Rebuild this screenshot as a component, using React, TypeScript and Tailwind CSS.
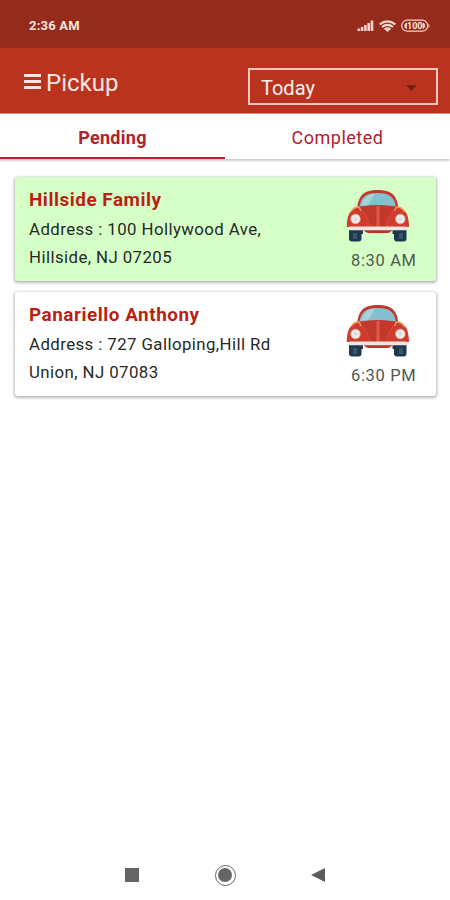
type Pickup = { name: string; address: string; city: string; time: string; active: boolean };

const PICKUPS: Pickup[] = [
  { name: "Hillside Family", address: "100 Hollywood Ave,", city: "Hillside, NJ 07205", time: "8:30 AM", active: true },
  { name: "Panariello Anthony", address: "727 Galloping,Hill Rd", city: "Union, NJ 07083", time: "6:30 PM", active: false },
];

function StatusIcons() {
  return (
    <svg width="74" height="16" viewBox="0 0 74 16" fill="#f3d3cc">
      <rect x="0.5" y="10.5" width="2.6" height="2.5" />
      <rect x="3.8" y="9" width="2.6" height="4" />
      <rect x="7.1" y="7" width="2.6" height="6" />
      <rect x="10.4" y="5" width="2.6" height="8" />
      <rect x="13.7" y="2.5" width="2.6" height="10.5" />
      <path d="M22 5.6 Q30.5 -1 39 5.6 L37.6 7.2 Q30.5 1.8 23.4 7.2 Z" />
      <path d="M24.3 8.2 Q30.5 3.3 36.7 8.2 L35.2 9.8 Q30.5 6.2 25.8 9.8 Z" />
      <path d="M26.8 10.7 Q30.5 7.8 34.2 10.7 L30.5 14 Z" />
      <rect x="44.7" y="2.2" width="26" height="11" rx="5.5" fill="none" stroke="#f3d3cc" strokeWidth="1.2" />
      <path d="M50 4.5 C46.5 5 46.5 10.5 50 11 Z M65.5 4.5 C69 5 69 10.5 65.5 11 Z" />
      <path d="M71.5 5.5 Q73.5 7.7 71.5 10 Z" />
      <text x="57.8" y="11" textAnchor="middle" fontSize="9" fontWeight="700" fill="#fbe3dd">100</text>
    </svg>
  );
}

function Car() {
  return (
    <svg className="shrink-0" width="64" height="54" viewBox="0 0 64 54">
      <rect x="3" y="36" width="12.5" height="16.5" rx="3" fill="#20384e" />
      <rect x="48" y="36" width="12.5" height="16.5" rx="3" fill="#20384e" />
      <path d="M14 41 H17 V45 H14 Z M46.5 41 H49 V45 H46.5 Z" fill="#20384e" />
      <rect x="7" y="44" width="4" height="6" fill="#35566f" />
      <rect x="53" y="44" width="4" height="6" fill="#35566f" />
      <path d="M11 21 C12 7 17 1 31.7 1 C46.5 1 51.5 7 52.5 21 Z" fill="#c0392b" />
      <path d="M13.5 18 C15 8 20 4 31.7 4 C43.5 4 48.5 8 50 18 Q32 15.5 13.5 18 Z" fill="#85bfd0" />
      <path d="M16.5 13 C19 7.5 23 5 29 4.5 L22 16.5 H15 Z" fill="#a5d3da" />
      <path d="M0.8 38 C0.8 27 4 19 13 18 Q32 15 51 18 C60 19 63 27 63 38 Z" fill="#cf3b2c" />
      <path d="M12 18 Q32 14 52 18 Q42 24 40 38 H24 Q22 24 12 18 Z" fill="#c4382b" />
      <path d="M30.4 17 H33.6 V38 H30.4 Z" fill="#dc5848" />
      <path d="M13 19 Q21 25 24 37 M51 19 Q43 25 40 37" fill="none" stroke="#d75a42" strokeWidth="0.7" />
      <path d="M5 23 C7 19 9 18 13 18 L15 22 M58.5 23 C56.5 19 54.5 18 50.5 18 L48.5 22" fill="none" stroke="#ee995b" strokeWidth="1.4" />
      <path d="M17 40 H47 C45 43.5 43 44 40 44 H24 C21 44 19 43.5 17 40 Z" fill="#b93228" />
      <rect x="2.5" y="37.5" width="59" height="3.8" rx="1.9" fill="#f2e4e1" />
      <circle cx="9.5" cy="30" r="4.8" fill="#f4ebe5" stroke="#dcaaa1" strokeWidth="0.8" />
      <circle cx="54.3" cy="30" r="4.8" fill="#f4ebe5" stroke="#dcaaa1" strokeWidth="0.8" />
      <circle cx="9.5" cy="30" r="1.8" fill="#cedce0" />
      <circle cx="54.3" cy="30" r="1.8" fill="#cedce0" />
    </svg>
  );
}

function PickupCard({ pickup }: { pickup: Pickup }) {
  return (
    <div className={`flex h-[104px] justify-between rounded-[3px] pl-[13.5px] shadow-[0_1px_3px_1px_rgba(0,0,0,0.28)] ${pickup.active ? "bg-[#d6ffc8]" : "bg-white"}`}>
      <div className="origin-left scale-x-[1.05] whitespace-nowrap pt-[9px] text-[16px] leading-[28.5px] text-[#252a25]">
        <p className="mb-[1px] text-[18px] font-bold tracking-[0.5px] text-[#b91f13]">{pickup.name}</p>
        <p className="tracking-[0.4px]">Address : {pickup.address}</p>
        <p className="tracking-[0.4px]">{pickup.city}</p>
      </div>
      <div className="flex w-[91px] flex-col pl-[1px] pt-[12px]">
        <Car />
        <span className="ml-[5px] mt-[6px] text-[16.5px] leading-6 tracking-[0.65px] text-[#505950]">{pickup.time}</span>
      </div>
    </div>
  );
}

export default function App() {
  return (
    <div className="flex h-[900px] w-[450px] flex-col overflow-hidden bg-white font-['Roboto',sans-serif]">
      {/* Status bar */}
      <div className="flex h-12 shrink-0 items-center justify-between bg-[#952b1a] pl-[29px] pr-[19px] pt-[3px]">
        <span className="text-[13px] font-bold tracking-[0.2px] text-[#f8e4df]">2:36 AM</span>
        <StatusIcons />
      </div>

      {/* App bar */}
      <header className="flex h-[66px] shrink-0 items-start justify-between border-b border-[#d98a7d] bg-[#b9331e] pl-[24px] pr-3">
        <div className="flex items-center gap-[5px] pt-[19px]">
          <div className="flex w-[17px] flex-col gap-[3px] pb-[3px]">
            <span className="h-[3px] bg-[#fbe7e2]" />
            <span className="h-[3px] bg-[#fbe7e2]" />
            <span className="h-[3px] bg-[#fbe7e2]" />
          </div>
          <h1 className="text-[24px] font-[450] leading-8 text-[#fbe7e2]">Pickup</h1>
        </div>
        <div className="mt-[20px] flex h-[37px] w-[190px] items-center justify-between border-2 border-[#f3c4ba] pl-[11px] pr-[19px] pt-[3px]">
          <span className="text-[20px] font-[450] text-[#fff0ec]">Today</span>
          <svg className="mb-[1px]" width="11" height="6" viewBox="0 0 12 6"><path d="M0 0 H12 L6 6 Z" fill="#6b2015" /></svg>
        </div>
      </header>

      {/* Tabs */}
      <nav className="flex h-[45px] shrink-0 text-center text-[18px] leading-[44px] text-[#b5202a] shadow-[0_2px_2px_rgba(0,0,0,0.2)]">
        <div className="w-[225px] border-b-2 border-[#b5202a] pt-[2px] font-bold tracking-[0.3px]">Pending</div>
        <div className="w-[225px] pt-[2px] tracking-[0.5px]">Completed</div>
      </nav>

      <main className="flex flex-1 flex-col gap-[11px] pl-[15px] pr-[14px] pt-[18px]">
        {PICKUPS.map(p => <PickupCard key={p.name} pickup={p} />)}
      </main>

      {/* Navigation buttons */}
      <footer className="flex h-[50px] shrink-0 items-center justify-between pl-[125px] pr-[125px]">
        <span className="size-[14px] bg-[#656565]" />
        <span className="flex size-[21px] items-center justify-center rounded-full border-[1.5px] border-[#656565]">
          <span className="size-[14px] rounded-full bg-[#656565]" />
        </span>
        <svg width="14" height="14" viewBox="0 0 14 14"><path d="M14 0 V14 L0 7 Z" fill="#5c5c5c" /></svg>
      </footer>
    </div>
  );
}
